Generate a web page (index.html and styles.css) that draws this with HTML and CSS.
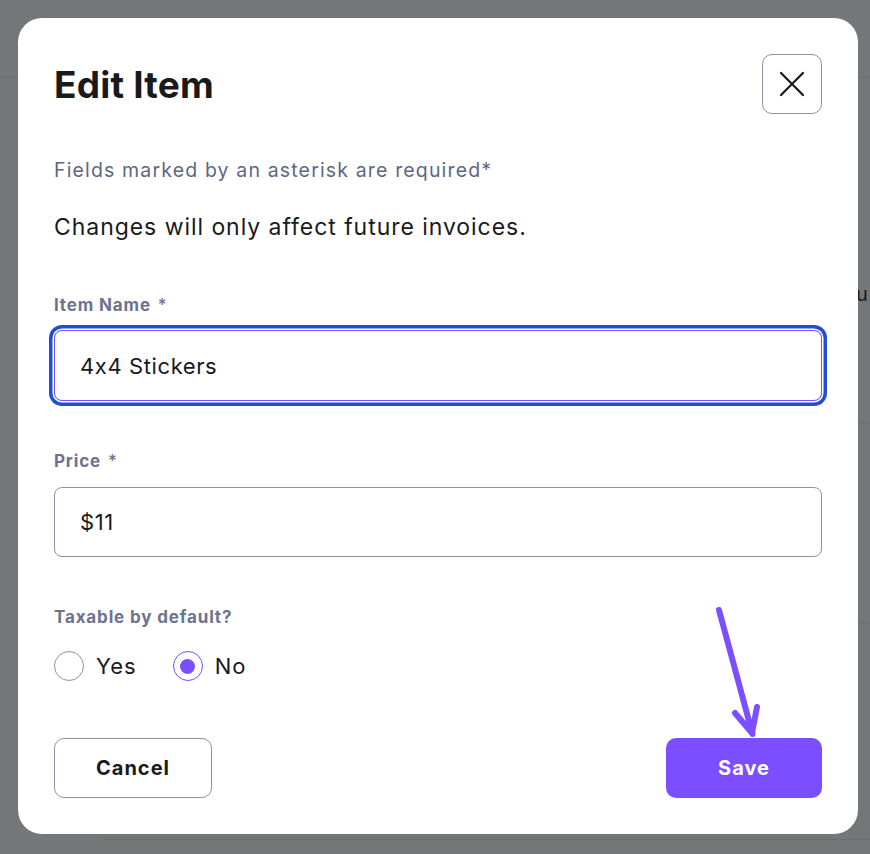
FILE: index.html
```html
<!DOCTYPE html>
<html>
<head>
<meta charset="utf-8">
<link rel="stylesheet" href="styles.css">
</head>
<body>
<div class="backdrop">
  <div class="bg-line l1"></div>
  <div class="bg-line l2"></div>
  <div class="bg-line l3"></div>
  <div class="bg-line l4"></div>
  <span class="bg-text">u</span>
</div>
<div class="modal">
  <div class="header">
    <h1 class="title">Edit Item</h1>
    <button class="close" aria-label="Close">
      <svg width="26" height="26" viewBox="0 0 26 26"><path d="M2 2 L24 24 M24 2 L2 24" stroke="#1a1a1a" stroke-width="2.2" stroke-linecap="round" fill="none"/></svg>
    </button>
  </div>
  <p class="hint">Fields marked by an asterisk are required*</p>
  <p class="notice">Changes will only affect future invoices.</p>

  <label class="label first">Item Name <span class="ast">*</span></label>
  <div class="input focused">4x4 Stickers</div>

  <label class="label">Price <span class="ast">*</span></label>
  <div class="input">$11</div>

  <label class="label">Taxable by default?</label>
  <div class="radios">
    <div class="radio"><span class="circle"></span><span class="rtext">Yes</span></div>
    <div class="radio"><span class="circle checked"><span class="dot"></span></span><span class="rtext">No</span></div>
  </div>

  <div class="actions">
    <button class="btn cancel">Cancel</button>
    <button class="btn save">Save</button>
  </div>

  <svg class="arrow" width="60" height="140" viewBox="0 0 60 140">
    <path d="M4 4 L37.5 128" stroke="#7b4fff" stroke-width="6" stroke-linecap="round" fill="none"/>
    <path d="M20 107 L37 127 L42 101" stroke="#7b4fff" stroke-width="6" stroke-linecap="round" stroke-linejoin="round" fill="none"/>
  </svg>
</div>
</body>
</html>
```

FILE: styles.css
```css
html, body {
  margin: 0;
  padding: 0;
}
body {
  background: #757677;
  font-family: "Inter", "Noto Sans", sans-serif;
  font-feature-settings: "calt" 0;
  width: 870px;
  height: 854px;
  overflow: hidden;
  position: relative;
}
.backdrop {
  position: absolute;
  inset: 0;
}
.bg-line {
  position: absolute;
  height: 1px;
  background: #6c6d6e;
}
.l1 { left: 0; width: 870px; top: 77px; }
.l2 { left: 858px; width: 12px; top: 422px; }
.l3 { left: 858px; width: 12px; top: 622px; }
.l4 { left: 102px; width: 768px; top: 839px; }
.bg-text {
  position: absolute;
  left: 856px;
  top: 282px;
  font-size: 20px;
  color: #1c1c22;
}
.modal {
  position: relative;
  margin: 18px;
  width: 840px;
  height: 816px;
  box-sizing: border-box;
  background: #ffffff;
  border-radius: 24px;
  padding: 36px;
  display: flex;
  flex-direction: column;
}
.header {
  display: flex;
  justify-content: space-between;
  align-items: center;
  height: 60px;
}
.title {
  margin: 0;
  font-size: 37px;
  font-weight: 700;
  color: #1a1a1a;
  letter-spacing: 0.2px;
}
.close {
  width: 60px;
  height: 60px;
  box-sizing: border-box;
  border: 1px solid #8b93ab;
  border-radius: 10px;
  background: #fff;
  display: flex;
  align-items: center;
  justify-content: center;
  padding: 0;
}
.hint {
  margin: 44px 0 0;
  font-size: 19.5px;
  line-height: 24px;
  color: #5b6785;
  letter-spacing: 1.15px;
}
.notice {
  margin: 30px 0 0;
  font-size: 23px;
  line-height: 30px;
  color: #1a1a1a;
  letter-spacing: 0.95px;
}
.label {
  display: block;
  margin-top: 50px;
  font-size: 17px;
  line-height: 20px;
  font-weight: 700;
  color: #6b7390;
  letter-spacing: 0.85px;
}
.label.first {
  margin-top: 53px;
}
.ast {
  font-weight: 500;
  margin-left: 2px;
}
.input {
  margin-top: 16px;
  height: 70px;
  box-sizing: border-box;
  border: 1px solid #8b93ab;
  border-radius: 8px;
  padding: 0 25px;
  display: flex;
  align-items: center;
  font-size: 22px;
  letter-spacing: 0.6px;
  color: #1a1a1a;
}
.input.focused {
  margin-top: 15px;
  height: 71px;
  border-color: #7b4fff;
  box-shadow: 0 0 0 1.5px #ffffff, 0 0 0 5px #1f4dd6;
}
.radios {
  margin-top: 24px;
  display: flex;
  gap: 36px;
  height: 30px;
  align-items: center;
}
.radio {
  display: flex;
  align-items: center;
  gap: 12px;
}
.circle {
  width: 30px;
  height: 30px;
  box-sizing: border-box;
  border: 1px solid #8b93ab;
  border-radius: 50%;
  display: flex;
  align-items: center;
  justify-content: center;
}
.circle.checked {
  border-color: #7b4fff;
}
.dot {
  width: 15px;
  height: 15px;
  border-radius: 50%;
  background: #7b4fff;
}
.rtext {
  font-size: 22px;
  letter-spacing: 1px;
  color: #1a1a1a;
}
.actions {
  margin-top: 57px;
  display: flex;
  justify-content: space-between;
}
.btn {
  height: 60px;
  border-radius: 10px;
  font-family: inherit;
  font-size: 20px;
  font-weight: 700;
  letter-spacing: 1px;
  box-sizing: border-box;
}
.cancel {
  width: 158px;
  background: #fff;
  border: 1px solid #8b93ab;
  color: #1a1a1a;
}
.save {
  width: 156px;
  background: #7b4fff;
  border: none;
  color: #ffffff;
}
.arrow {
  position: absolute;
  left: 697px;
  top: 588px;
}
```
